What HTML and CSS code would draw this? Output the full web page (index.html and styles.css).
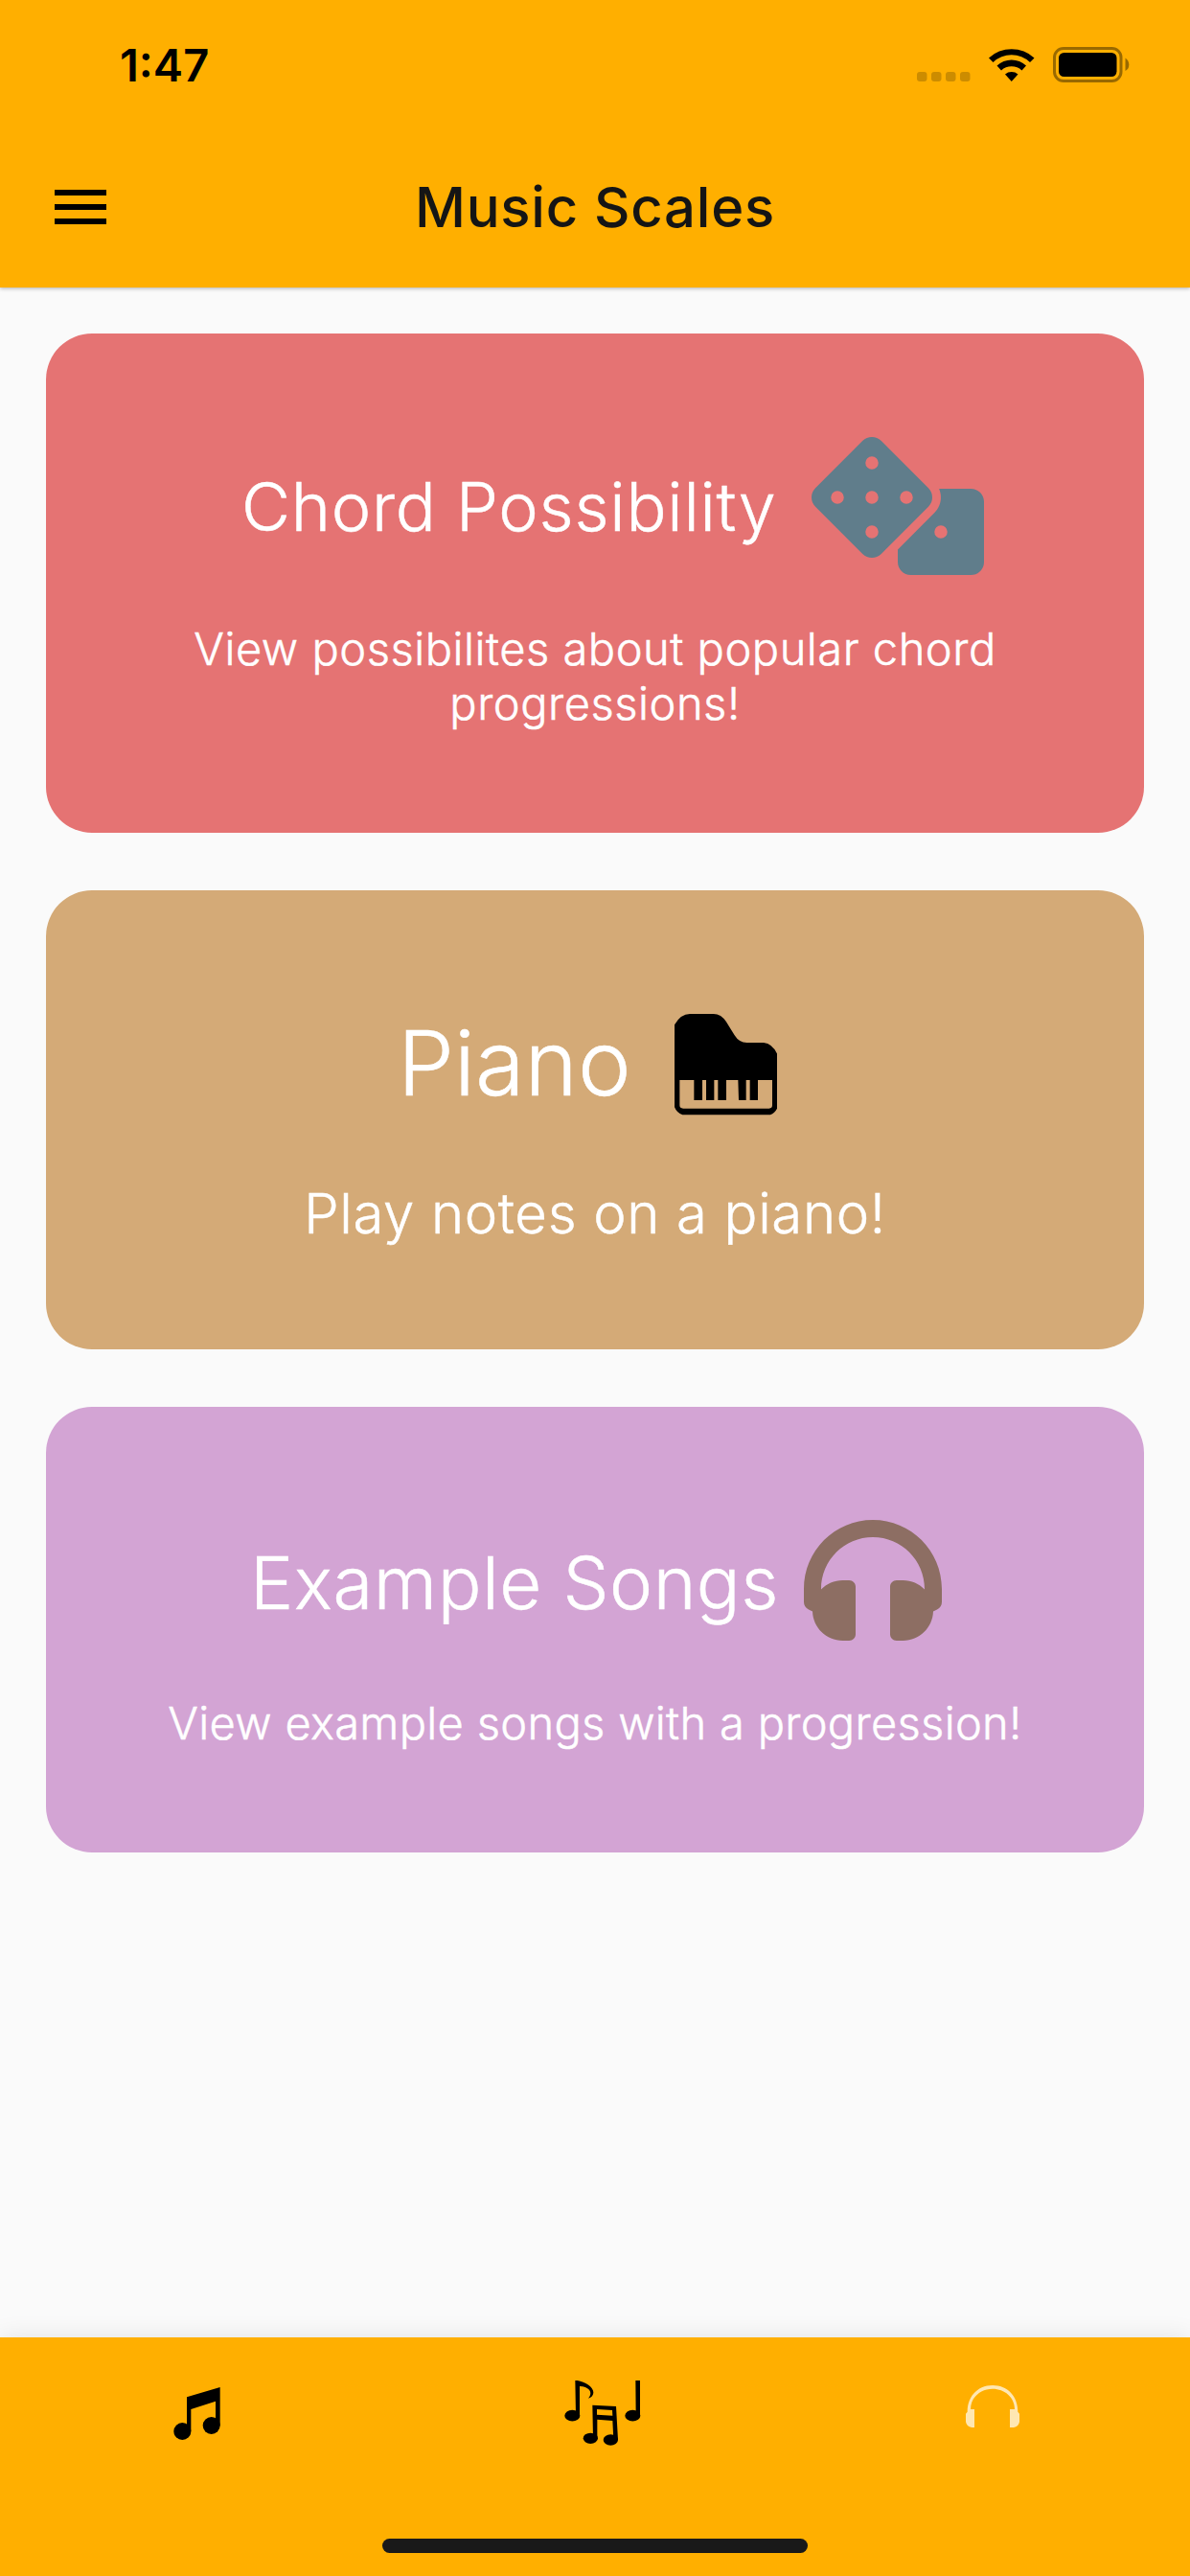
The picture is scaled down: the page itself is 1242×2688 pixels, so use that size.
FILE: index.html
```html
<!DOCTYPE html>
<html lang="en">
<head>
<meta charset="utf-8">
<title>Music Scales</title>
<link rel="stylesheet" href="styles.css">
</head>
<body>
<div class="screen">
  <header class="top">
    <div class="status">
      <span class="time">1:47</span>
      <svg class="status-icons" viewBox="0 0 222 40" width="222" height="40">
        <g fill="#000" fill-opacity=".2"><rect x="0" y="27" width="10.500" height="10" rx="3"/><rect x="15" y="27" width="10.500" height="10" rx="3"/><rect x="30" y="27" width="10.500" height="10" rx="3"/><rect x="45" y="27" width="10.500" height="10" rx="3"/></g>
        <g><path d="M75 12.500A35 35 0 0 1 122.500 12.500L118 17A28 28 0 0 0 79.500 17Z"/><path d="M83.500 20.500A22.500 22.500 0 0 1 114 20.500L109.500 25.500A16 16 0 0 0 88 25.500Z"/><path d="M92 29.500A10.500 10.500 0 0 1 105.500 29.500L98.750 37Z"/></g>
        <rect x="143.500" y="2.500" width="69.500" height="34" rx="9.500" fill="none" stroke="#000" stroke-opacity=".4" stroke-width="3"/>
        <rect x="148" y="7" width="60.500" height="25" rx="5.500"/>
        <path d="M217.500 12.500Q221.300 15 221.300 19.500T217.500 26Z" fill-opacity=".4"/>
      </svg>
    </div>
    <div class="appbar">
      <svg class="menu" viewBox="0 0 24 24" width="72" height="72"><path d="M3 18h18v-2H3v2zm0-5h18v-2H3v2zm0-7v2h18V6H3z"/></svg>
      <h1>Music Scales</h1>
    </div>
  </header>
  <main class="cards">
    <section class="card chord">
      <div class="head">
        <h2>Chord Possibility</h2>
        <svg viewBox="0 0 640 512" width="180" height="144" fill="#607d8b"><path d="M592 192H473.260c12.690 29.590 7.120 65.200-17 89.320L320 417.580V464c0 26.510 21.490 48 48 48h224c26.510 0 48-21.490 48-48V240c0-26.510-21.490-48-48-48zM480 376a24 24 0 1 1 0-48 24 24 0 0 1 0 48zm-46.370-186.700L258.700 14.370c-19.160-19.160-50.230-19.160-69.390 0L14.370 189.300c-19.160 19.160-19.160 50.230 0 69.390L189.300 433.630c19.160 19.160 50.230 19.160 69.390 0L433.630 258.700c19.160-19.170 19.160-50.240 0-69.400zM96 248a24 24 0 1 1 0-48 24 24 0 0 1 0 48zm128 128a24 24 0 1 1 0-48 24 24 0 0 1 0 48zm0-128a24 24 0 1 1 0-48 24 24 0 0 1 0 48zm0-128a24 24 0 1 1 0-48 24 24 0 0 1 0 48zm128 128a24 24 0 1 1 0-48 24 24 0 0 1 0 48z"/></svg>
      </div>
      <p>View possibilites about popular chord<br>progressions!</p>
    </section>
    <section class="card piano">
      <div class="head">
        <h2>Piano</h2>
        <svg viewBox="0 0 323 316" width="107.700" height="105.300"><path fill-rule="evenodd" d="M0 34Q19 0 48 0H122Q146 0 162 25L188 67Q202 90 226 90H279Q308 93 323 129V292Q316 310 300 316H25Q7 310 0 292ZM16 207V286Q16 296 27 296H296Q306 296 306 286V207H261V270H236V207H224V270H201L199 207H162V270H136V207H124V270H99V207H87V270H61V207Z"/></svg>
      </div>
      <p>Play notes on a piano!</p>
    </section>
    <section class="card songs">
      <div class="head">
        <h2>Example Songs</h2>
        <svg viewBox="0 0 512 512" width="144" height="144" fill="#8d6e63"><path d="M256 32C114.520 32 0 146.497 0 288v48a32 32 0 0 0 17.689 28.622l14.383 7.191C34.083 431.903 83.421 480 144 480h24c13.255 0 24-10.745 24-24V280c0-13.255-10.745-24-24-24h-24c-31.342 0-59.671 12.879-80 33.627V288c0-105.869 86.131-192 192-192s192 86.131 192 192v1.627C427.671 268.879 399.342 256 368 256h-24c-13.255 0-24 10.745-24 24v176c0 13.255 10.745 24 24 24h24c60.579 0 109.917-48.098 111.928-108.187l14.382-7.191A32 32 0 0 0 512 336v-48c0-141.479-114.496-256-256-256z"/></svg>
      </div>
      <p>View example songs with a progression!</p>
    </section>
  </main>
  <nav class="tabs">
    <div class="tab tab-note"><svg viewBox="0 0 330 330" width="110" height="110"><path d="M135 124L239 93V214H225V137L148 162V232H135Z"/><circle cx="121" cy="231" r="27"/><circle cx="212" cy="213" r="27"/></svg></div>
    <div class="tab tab-notes"><svg viewBox="0 0 360 330" width="120" height="110"><path d="M91 72H98C122 76 148 92 148 109C148 118 141 127 132 128C140 119 141 108 135 101Q125 91 105 90V182H93ZM280 72H294V182H281ZM145 149L219 153L225 258H211L208 198L160 194V253H147ZM159 162V179L208 182L207 165Z" fill-rule="evenodd"/><ellipse cx="82" cy="182" rx="24" ry="17.500"/><ellipse cx="271" cy="182" rx="24" ry="17.500"/><ellipse cx="139" cy="253" rx="23" ry="17"/><ellipse cx="202" cy="258" rx="23" ry="17"/></svg></div>
    <div class="tab"><svg viewBox="0 0 330 330" width="110" height="110" fill="#ffe7b2"><path d="M89 170C89 120 123 87 168 87S247 120 247 170L252 176V201Q250 216 234 219H222V162H237C237 124 205 98 168 98S99 124 99 162H111V219H103Q86 216 84 201V176Z"/></svg></div>
    <div class="home"></div>
  </nav>
</div>
</body>
</html>
```
FILE: styles.css
```css
* { box-sizing: border-box; margin: 0; padding: 0; }
body { background: #fafafa; font-family: Inter, "Liberation Sans", sans-serif; color: #000; }
.screen { display: flex; flex-direction: column; width: 1242px; height: 2688px; }
svg { display: block; flex: none; }

.top { height: 300px; background: #ffaf00; box-shadow: 0 1px 4px rgba(0, 0, 0, .3); }
.status { display: flex; justify-content: space-between; height: 132px; padding: 48px 63px 0 125px; }
.time { font-size: 47px; font-weight: 600; line-height: 40px; }
.appbar { display: grid; grid-template-columns: 72px 1fr 72px; align-items: center; height: 168px; padding: 0 48px; }
h1 { font-size: 58px; font-weight: 500; line-height: 72px; letter-spacing: .75px; text-align: center; color: #151515; }

.cards { flex: 1; display: flex; flex-direction: column; gap: 60px; padding: 48px 48px 0; }
.card { border-radius: 48px; color: #fff; text-align: center; }
.head { display: flex; align-items: center; }
h2, p { font-weight: 300; white-space: nowrap; -webkit-text-stroke: .5px #fff; }
p { font-size: 47px; line-height: 57px; letter-spacing: .53px; }

.chord { height: 521px; padding-top: 108px; background: #e57373; }
.chord .head { height: 144px; gap: 37px; padding-left: 204px; }
.chord h2 { font-size: 70px; letter-spacing: .75px; }
.chord p { margin-top: 48px; }

.piano { height: 479px; padding-top: 129px; background: #d4aa77; }
.piano .head { height: 106px; gap: 45px; padding-left: 367px; }
.piano h2 { padding-bottom: 4px; font-size: 94px; }
.piano p { margin-top: 66px; font-size: 58px; line-height: 72px; letter-spacing: .67px; }

.songs { height: 465px; padding-top: 109px; background: #d3a4d4; }
.songs .head { height: 144px; gap: 26px; padding-left: 213px; }
.songs h2 { padding-top: 4px; font-size: 76px; letter-spacing: .5px; }
.songs p { margin-top: 48px; letter-spacing: .32px; }

.tabs { position: relative; display: grid; grid-template-columns: repeat(3, 1fr); height: 249px; padding-top: 21px; background: #ffaf00; box-shadow: 0 0 24px rgba(0, 0, 0, .1); }
.tab { display: flex; justify-content: center; }
.tab-note { padding-right: 4px; }
.tab-notes { padding-left: 18px; }
.home { position: absolute; left: 399px; bottom: 24px; width: 444px; height: 15px; border-radius: 8px; background: #191919; }
```
